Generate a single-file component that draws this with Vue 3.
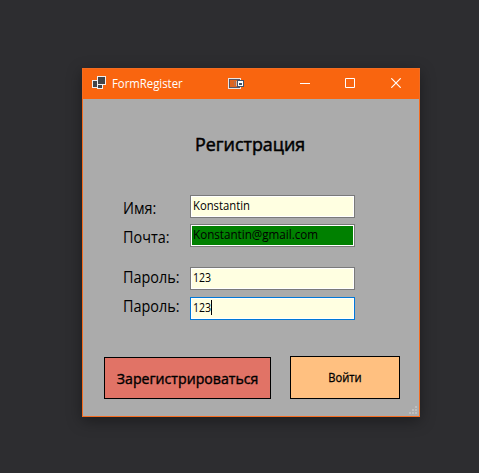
<script setup>
import { ref } from 'vue'

const fields = ref([
  { id: 'name', label: 'Имя:', value: 'Konstantin' },
  { id: 'mail', label: 'Почта:', value: 'Konstantin@gmail.com', state: 'valid' },
  { id: 'pass', label: 'Пароль:', value: '123' },
  { id: 'repeat', label: 'Пароль:', value: '123', state: 'active' },
])
</script>

<template>
  <main class="desktop">
    <section class="window">
      <header class="titlebar">
        <svg class="app-icon" width="14" height="14" viewBox="0 0 14 14" shape-rendering="crispEdges">
          <g fill="#444549" stroke="#f2eeee">
            <rect x=".5" y="4.5" width="5" height="7" />
            <rect x="5.5" y="8.5" width="5" height="4" />
            <rect x="5.5" y=".5" width="8" height="8" />
          </g>
        </svg>
        <span class="caption">FormRegister</span>
        <svg class="capture" width="16" height="12" viewBox="0 0 16 12" shape-rendering="crispEdges">
          <path d="M0 0h13v11H0z" fill="#ece4e0" />
          <path d="M1 1h11v9H1z" fill="#5b5560" />
          <path d="M2 2h10v7H2z" fill="#dd6420" />
          <path d="M6 3h1v5H6z" fill="#a87560" />
          <path d="M8 3h1v5H8z" fill="#d9b5a2" />
          <path d="M9 2h7v7H9z" fill="#44526a" />
          <path d="M10 3h5v5h-5z" fill="#fff" />
          <path d="M11 5h3v2h-3z" fill="#44526a" />
        </svg>
        <nav class="controls">
          <svg width="10" height="10" viewBox="0 0 10 10"><path d="M0 5.5h10" /></svg>
          <svg width="10" height="10" viewBox="0 0 10 10"><path d="M.5.5h9v9h-9z" /></svg>
          <svg width="10" height="10" viewBox="0 0 10 10"><path d="M.3.3l9.400 9.400M9.700.3L.3 9.700" stroke-width="1.2" /></svg>
        </nav>
      </header>
      <div class="body">
        <h1 class="heading">Регистрация</h1>
        <div class="fields">
          <div v-for="f in fields" :key="f.id" class="row" :class="[f.id, f.state]">
            <span class="label">{{ f.label }}</span>
            <div class="box"><span class="value">{{ f.value }}</span><i v-if="f.state === 'active'" class="caret"></i></div>
          </div>
        </div>
        <div class="actions">
          <button class="btn register"><span>Зарегистрироваться</span></button>
          <button class="btn login"><span>Войти</span></button>
        </div>
        <svg class="grip" width="8" height="8" viewBox="0 0 8 8" shape-rendering="crispEdges">
          <path d="M6 0h2v2H6zM3 3h2v2H3zM6 3h2v2H6zM0 6h2v2H0zM3 6h2v2H3zM6 6h2v2H6z" fill="#bfbfbf" />
        </svg>
      </div>
    </section>
  </main>
</template>

<style>
body { margin: 0; background: #2d2d30; }
</style>

<style scoped>
.desktop {
  box-sizing: border-box;
  width: 479px;
  height: 473px;
  padding: 68px 0 0 82px;
  overflow: hidden;
  background: #2d2d30;
  font-family: "Open Sans", "Noto Sans", sans-serif;
  color: #000;
}
.window {
  box-sizing: border-box;
  width: 338px;
  height: 349px;
  border: 1px solid #f46c20;
  background: #ababab;
  box-shadow: 0 4px 14px rgba(0, 0, 0, .38);
}
.titlebar {
  display: flex;
  align-items: flex-start;
  height: 30px;
  background: #f9650f;
  color: #fff;
}
.app-icon { margin: 7px 0 0 9px; }
.caption {
  width: 116px;
  margin: 6px 0 0 6px;
  font-size: 12px;
  line-height: 17px;
  transform: scaleX(.945);
  transform-origin: left center;
}
.capture { margin-top: 9px; }
.controls {
  display: flex;
  gap: 36px;
  margin: 9px 0 0 56px;
  fill: none;
  stroke: #fff;
}
.controls svg { display: block; width: 10px; }
.controls svg:first-child { margin-right: -1px; }
.body {
  position: relative;
  height: 317px;
  display: flex;
  flex-direction: column;
}
.heading {
  margin: 33px 0 0 112px;
  height: 24px;
  font-size: 17.900px;
  font-weight: 400;
  -webkit-text-stroke: .5px #000;
  line-height: 24px;
  white-space: nowrap;
}
.fields { margin: 39px 0 0 40px; }
.row {
  display: flex;
  height: 23px;
  margin-bottom: 6px;
}
.row.mail { margin-bottom: 20px; }
.row.pass { margin-bottom: 7px; }
.row.repeat { margin-bottom: 0; }
.label {
  box-sizing: border-box;
  width: 67px;
  height: 23px;
  font-size: 15.500px;
  line-height: 23px;
  padding-top: 2px;
  transform: scaleX(.93);
  transform-origin: left center;
}
.pass .label { padding-top: 0; line-height: 21px; }
.repeat .label { padding-top: 0; line-height: 19px; }
.box {
  box-sizing: border-box;
  display: flex;
  width: 165px;
  height: 23px;
  padding-left: 2px;
  border: 1px solid #7a7a7a;
  box-shadow: inset 0 0 0 1px #fff;
  background: #ffffe1;
  font-size: 12px;
  line-height: 20px;
}
.value {
  transform: scaleX(.94);
  transform-origin: left center;
}
.valid .value { transform: scaleX(.97); }
.pass .value, .repeat .value { transform: scaleX(.88); }
.valid .box { background: #008000; }
.active .box { border-color: #0078d7; }
.caret { width: 1px; height: 15px; margin: 2px 0 0 -3px; background: #000; }
.actions {
  display: flex;
  align-items: flex-end;
  gap: 19px;
  margin: 36px 0 0 21px;
}
.btn {
  box-sizing: border-box;
  padding: 0;
  border: 1px solid #000;
  border-radius: 0;
  color: #000;
  font-family: inherit;
  white-space: nowrap;
}
.btn span { display: inline-block; }
.register {
  width: 167px;
  height: 42px;
  background: #e17366;
  font-size: 14.500px;
  -webkit-text-stroke: .4px #000;
}
.register span { transform: scaleX(.975); }
.login {
  width: 110px;
  height: 43px;
  background: #ffc080;
  font-size: 12px;
  -webkit-text-stroke: .3px #000;
}
.login span { transform: scaleX(.93); }
.grip { position: absolute; right: 2px; bottom: 2px; }
</style>
